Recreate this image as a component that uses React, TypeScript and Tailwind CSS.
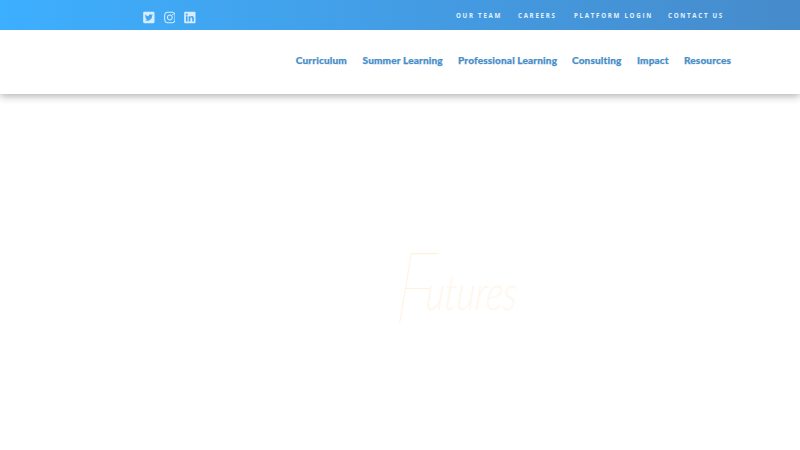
import { FaInstagram, FaLinkedin, FaTwitterSquare } from "react-icons/fa";

const utilityLinks = [
  { label: "OUR TEAM", width: "w-[62px]" },
  { label: "CAREERS", width: "w-[56px]" },
  { label: "PLATFORM LOGIN", width: "w-[94px]" },
  { label: "CONTACT US", width: "w-[58px]" },
];

const navLinks = [
  { label: "Curriculum", width: "w-[66.8px]" },
  { label: "Summer Learning", width: "w-[95.4px]" },
  { label: "Professional Learning", width: "w-[114px]" },
  { label: "Consulting", width: "w-[65px]" },
  { label: "Impact", width: "w-[47px]" },
  { label: "Resources", width: "w-[50px]" },
];

function TopBar() {
  return (
    <div className="relative z-10 flex h-[30px] bg-linear-to-r from-[#3dafff] to-[#468bcb]">
      <div className="flex gap-[9px] pt-[11px] pl-[143px] text-[#d5edff]">
        <FaTwitterSquare className="h-[13px] w-[11.7px]" />
        <FaInstagram className="h-[13px] w-[11.7px]" />
        <FaLinkedin className="h-[13px] w-[11.7px]" />
      </div>
      <nav className="ml-auto flex pt-[9.5px] pr-[74px] font-['Open_Sans',sans-serif] text-[7.4px] leading-[10px] font-bold tracking-[2.05px] text-[#e2f2ff]">
        {utilityLinks.map((link) => (
          <a key={link.label} className={`origin-left scale-x-[0.835] whitespace-nowrap ${link.width}`}>
            {link.label}
          </a>
        ))}
      </nav>
    </div>
  );
}

function MainNav() {
  return (
    <header className="flex h-16 justify-end bg-white pt-[22px] pr-[66px] shadow-[0_2px_8px_rgba(0,0,0,0.32)]">
      <nav className="flex font-['Lato',sans-serif] text-[10px] leading-4 font-black tracking-[0.16px] text-[#488fca] [-webkit-text-stroke:0.25px_#488fca]">
        {navLinks.map((link) => (
          <a key={link.label} className={`whitespace-nowrap ${link.width}`}>
            {link.label}
          </a>
        ))}
      </nav>
    </header>
  );
}

export default function App() {
  return (
    <div className="flex h-[450px] w-[800px] flex-col overflow-hidden bg-white">
      <TopBar />
      <MainNav />
      <main className="pt-[149px] pl-[396px]">
        <h1 className="w-fit origin-left -skew-x-6 scale-y-[1.35] font-['Lato',cursive] text-[36px] leading-[90px] font-light whitespace-nowrap text-[#fff7ed] italic">
          <span className="text-[74px] font-thin tracking-[-9px] text-[#fff1e0]">F</span>
          <span className="align-[10px]">utures</span>
        </h1>
      </main>
    </div>
  );
}
